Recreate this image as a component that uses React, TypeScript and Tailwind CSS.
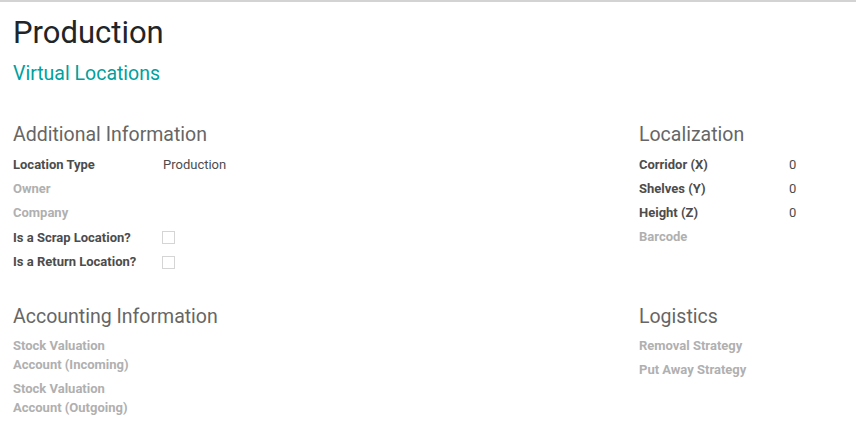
import React from 'react';

type Field = { label: string; value?: string; empty?: boolean; checkbox?: boolean };

const additional: Field[] = [
  { label: 'Location Type', value: 'Production' },
  { label: 'Owner', empty: true },
  { label: 'Company', empty: true },
  { label: 'Is a Scrap Location?', checkbox: true },
  { label: 'Is a Return Location?', checkbox: true },
];

const localization: Field[] = [
  { label: 'Corridor (X)', value: '0' },
  { label: 'Shelves (Y)', value: '0' },
  { label: 'Height (Z)', value: '0' },
  { label: 'Barcode', empty: true },
];

function FieldRow({ field }: { field: Field }) {
  return (
    <div className={`flex items-center ${field.checkbox ? 'h-[24.5px]' : 'h-6'}`}>
      <div
        className={`w-[150px] shrink-0 text-[13px] font-bold ${
          field.empty ? 'text-[#b0b0b0]' : 'text-[#4c4c4c]'
        }`}
      >
        {field.label}
      </div>
      {field.value && <div className="text-[13px] text-[#4c4c4c]">{field.value}</div>}
      {field.checkbox && (
        <div className="w-[13px] h-[13px] border border-[#d5d5d5] bg-white ml-[-1px] mt-[1px]" />
      )}
    </div>
  );
}

function SectionTitle({ children }: { children: React.ReactNode }) {
  return <h2 className="text-[19.5px] leading-[28px] text-[#666666] mb-[4px]">{children}</h2>;
}

export default function App() {
  return (
    <div
      className="w-[856px] h-[428px] bg-white border-t-2 border-[#d3d3d3] overflow-hidden"
      style={{ fontFamily: 'Roboto, "Noto Sans", sans-serif' }}
    >
      <div className="pl-[13px] pt-[11px]">
        <h1 className="text-[31px] leading-[40px] text-[#212529]">Production</h1>
        <div className="text-[19.5px] leading-[26px] text-[#00A09D] mt-[8px]">Virtual Locations</div>

        <div className="grid grid-cols-[626px_1fr] mt-[34px]">
          <div>
            <SectionTitle>Additional Information</SectionTitle>
            {additional.map((f) => (
              <FieldRow key={f.label} field={f} />
            ))}
          </div>
          <div>
            <SectionTitle>Localization</SectionTitle>
            {localization.map((f) => (
              <FieldRow key={f.label} field={f} />
            ))}
          </div>
        </div>

        <div className="grid grid-cols-[626px_1fr] mt-[29px]">
          <div>
            <SectionTitle>Accounting Information</SectionTitle>
            <div className="text-[13px] font-bold text-[#b0b0b0] leading-[19px] w-[150px] pt-[1px] pb-[1px]">
              Stock Valuation
              <br />
              Account (Incoming)
            </div>
            <div className="text-[13px] font-bold text-[#b0b0b0] leading-[19px] w-[150px] py-[1px] mt-[3px]">
              Stock Valuation
              <br />
              Account (Outgoing)
            </div>
          </div>
          <div>
            <SectionTitle>Logistics</SectionTitle>
            <div className="mt-[-1px]">
              <FieldRow field={{ label: 'Removal Strategy', empty: true }} />
              <FieldRow field={{ label: 'Put Away Strategy', empty: true }} />
            </div>
          </div>
        </div>
      </div>
    </div>
  );
}
